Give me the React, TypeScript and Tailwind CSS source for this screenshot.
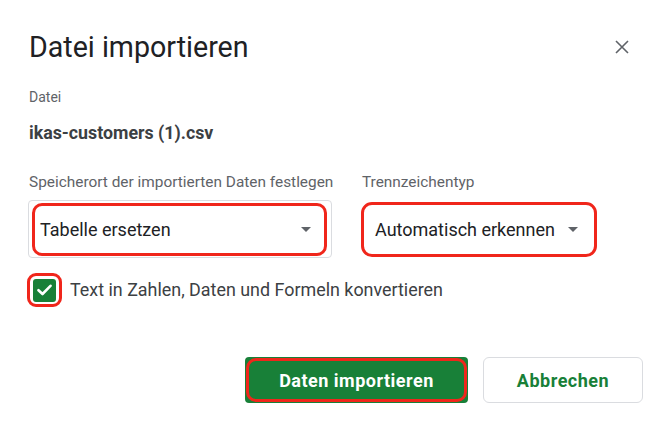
const RED = "border-[#f0261b]";

function Caret() {
  return (
    <svg width="10" height="5" viewBox="0 0 10 5" className="shrink-0">
      <path d="M0 0 L10 0 L5 5 Z" fill="#5f6368" />
    </svg>
  );
}

export default function App() {
  return (
    <div
      className="w-[670px] h-[431px] bg-white flex flex-col pl-[28px] pt-[29px] text-[#202124]"
      style={{ fontFamily: "Roboto, 'Liberation Sans', sans-serif" }}
    >
      {/* Header */}
      <div className="flex items-center justify-between h-[36px] pr-[41px]">
        <h1 className="text-[28.6px] leading-[36px] font-normal ml-[1px]">Datei importieren</h1>
        <svg width="14" height="14" viewBox="0 0 14 14">
          <path d="M1 1 L13 13 M13 1 L1 13" stroke="#5f6368" strokeWidth="1.6" />
        </svg>
      </div>

      {/* File */}
      <div className="mt-[22px] text-[14px] leading-[20px] text-[#5f6368] ml-[1px]">Datei</div>
      <div className="mt-[14px] text-[17.8px] leading-[24px] font-bold text-[#3c4043] ml-[1px]">
        ikas-customers (1).csv
      </div>

      {/* Selects */}
      <div className="flex mt-[27px] gap-[29px]">
        <div className="flex flex-col w-[304px]">
          <div className="text-[15.4px] leading-[20px] text-[#5f6368] ml-[1px] whitespace-nowrap">
            Speicherort der importierten Daten festlegen
          </div>
          <div className="mt-[8px] h-[58px] border border-[#dadce0] rounded-[4px] pl-[3px] pr-[4px] pt-[2px] pb-[1px] flex">
            <div className={`flex-1 flex items-center justify-between border-[3px] ${RED} rounded-[10px] pl-[5px] pr-[13px]`}>
              <span className="text-[18px] text-[#202124]">Tabelle ersetzen</span>
              <Caret />
            </div>
          </div>
        </div>
        <div className="flex flex-col">
          <div className="text-[15.4px] leading-[20px] text-[#5f6368] ml-[1px]">Trennzeichentyp</div>
          <div className={`mt-[10px] h-[55px] w-[236px] flex items-center border-[3px] ${RED} rounded-[11px] pl-[11px] gap-[13px]`}>
            <span className="text-[18px] text-[#202124]">Automatisch erkennen</span>
            <Caret />
          </div>
        </div>
      </div>

      {/* Checkbox */}
      <div className="flex items-center mt-[15px] ml-[-1px] gap-[8px]">
        <div className={`w-[35px] h-[34px] border-[3px] ${RED} rounded-[9px] flex items-center justify-center`}>
          <div className="w-[23px] h-[23px] rounded-[3px] bg-[#188038] flex items-center justify-center">
            <svg width="15" height="12" viewBox="0 0 15 12">
              <path d="M1.5 6.2 L5.5 10 L13.5 1.8" stroke="white" strokeWidth="2.6" fill="none" strokeLinecap="round" strokeLinejoin="round" />
            </svg>
          </div>
        </div>
        <span className="text-[17.9px] leading-[24px] text-[#3c4043]">
          Text in Zahlen, Daten und Formeln konvertieren
        </span>
      </div>

      {/* Buttons */}
      <div className="flex justify-end gap-[15px] mt-[50px] pr-[27px]">
        <div className="w-[223px] h-[46px] bg-[#188038] rounded-[4px] p-[1px] flex">
          <div className={`flex-1 flex items-center justify-center border-[3px] ${RED} rounded-[10px] text-white text-[18px] font-bold tracking-[0.5px]`}>
            Daten importieren
          </div>
        </div>
        <div className="w-[160px] h-[46px] border border-[#dadce0] rounded-[6px] flex items-center justify-center text-[#188038] text-[18px] font-bold tracking-[0.5px]">
          Abbrechen
        </div>
      </div>
    </div>
  );
}
